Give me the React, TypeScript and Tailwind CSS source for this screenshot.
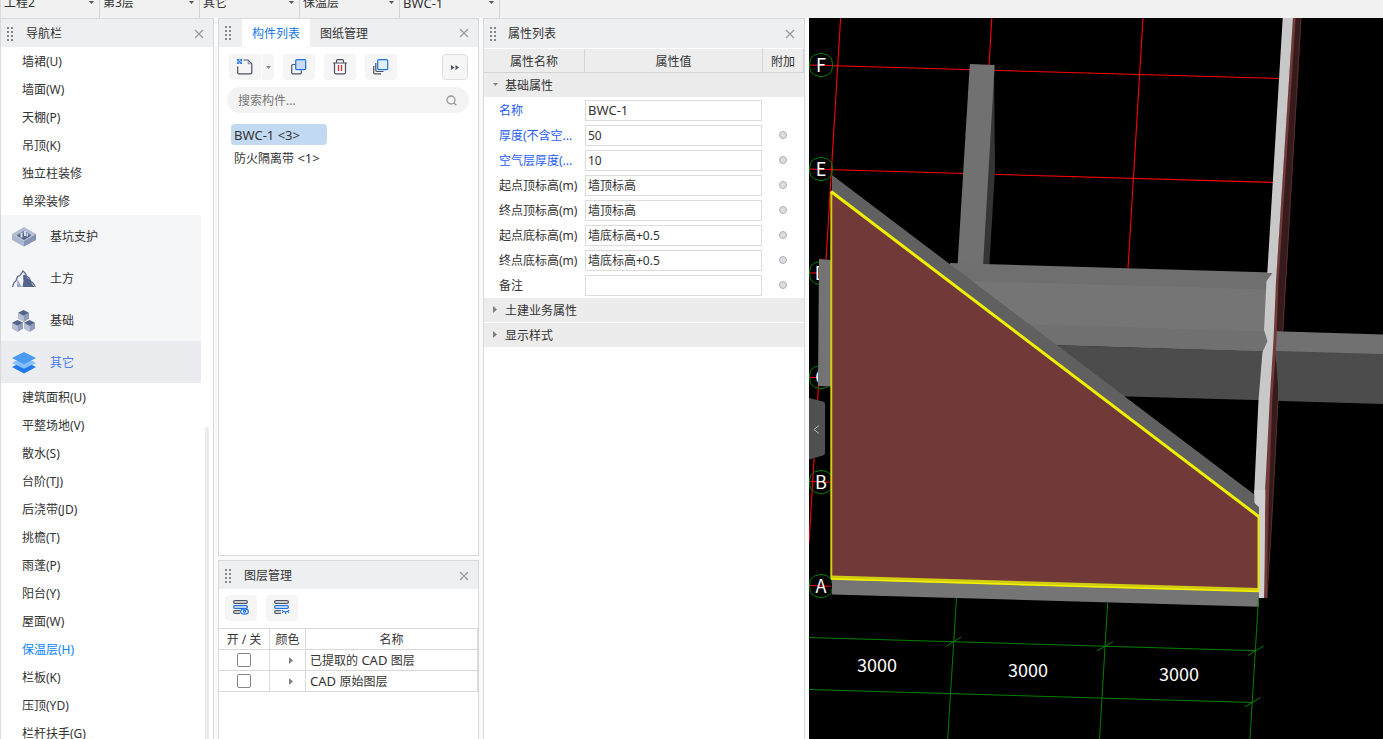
import React from 'react';

const FONT = "font-['Noto_Sans','Noto_Sans_CJK_SC',sans-serif]";

const topFields = ['工程2', '第3层', '其它', '保温层', 'BWC-1'];

const navBefore = ['墙裙(U)', '墙面(W)', '天棚(P)', '吊顶(K)', '独立柱装修', '单梁装修'];

const navAfter = [
  '建筑面积(U)', '平整场地(V)', '散水(S)', '台阶(TJ)', '后浇带(JD)', '挑檐(T)', '雨蓬(P)',
  '阳台(Y)', '屋面(W)', '保温层(H)', '栏板(K)', '压顶(YD)', '栏杆扶手(G)',
];

const properties = [
  { id: 'name', label: '名称', value: 'BWC-1', blue: true, extra: false },
  { id: 'thickness', label: '厚度(不含空...', value: '50', blue: true, extra: true },
  { id: 'air', label: '空气层厚度(...', value: '10', blue: true, extra: true },
  { id: 'start-top', label: '起点顶标高(m)', value: '墙顶标高', blue: false, extra: true },
  { id: 'end-top', label: '终点顶标高(m)', value: '墙顶标高', blue: false, extra: true },
  { id: 'start-bottom', label: '起点底标高(m)', value: '墙底标高+0.5', blue: false, extra: true },
  { id: 'end-bottom', label: '终点底标高(m)', value: '墙底标高+0.5', blue: false, extra: true },
  { id: 'remark', label: '备注', value: '', blue: false, extra: true },
];

function Latin({ children }: { children: React.ReactNode }) {
  return <span className="text-[13px]">{children}</span>;
}

const layers = [
  { id: 'extracted', label: <>已提取的<Latin> CAD </Latin>图层</> },
  { id: 'original', label: <><Latin>CAD </Latin>原始图层</> },
];

function Grip() {
  return (
    <svg width="8" height="16" viewBox="0 0 8 16" className="shrink-0" fill="#85868a" aria-hidden="true">
      {[1, 5, 9, 13].map((y) => (
        <g key={y}>
          <rect x="1" y={y} width="2" height="2" />
          <rect x="5" y={y} width="2" height="2" />
        </g>
      ))}
    </svg>
  );
}

function CloseButton({ label }: { label: string }) {
  return (
    <button type="button" aria-label={label} className="ml-auto flex size-4 shrink-0 items-center justify-center">
      <svg width="10" height="10" viewBox="0 0 10 10" fill="none" stroke="#9a9b9e" strokeWidth="1.2">
        <path d="M1 1l8 8M9 1L1 9" />
      </svg>
    </button>
  );
}

function DownArrow({ color = '#555' }: { color?: string }) {
  return (
    <svg width="5" height="3" viewBox="0 0 5 3" fill={color} aria-hidden="true">
      <path d="M0 0h5L2.5 3z" />
    </svg>
  );
}

function RightArrow() {
  return (
    <svg width="4" height="7" viewBox="0 0 4 7" fill="#808080" aria-hidden="true">
      <path d="M0 0l4 3.5L0 7z" />
    </svg>
  );
}

function TopBar() {
  return (
    <header className="flex h-[18px] shrink-0 items-end overflow-hidden border-l border-[#dcdcdc] bg-[#f1f1f1]">
      {topFields.map((name, i) => (
        <div key={name} className={`relative h-[30px] shrink-0 border-r border-[#d4d4d4] ${i === 0 ? 'w-[99px]' : 'w-[100px]'}`}>
          <select
            aria-label={name}
            className={`h-full w-full appearance-none bg-transparent pl-[3px] text-[#333] ${name === 'BWC-1' ? 'text-[13px]' : ''}`}
          >
            <option>{name}</option>
          </select>
          <span className="pointer-events-none absolute top-[13px] right-[5px]">
            <DownArrow />
          </span>
        </div>
      ))}
    </header>
  );
}

function PitIcon() {
  return (
    <svg width="24" height="20" viewBox="0 0 24 20">
      <path d="M12 0l12 7-12 7L0 7z" fill="#b4bdd2" />
      <path d="M0 7l12 7v5.5L0 13z" fill="#a9b4cd" />
      <path d="M24 7l-12 7v5.5L24 13z" fill="#8593b5" />
      <path d="M12 3.5l7.5 4.5-7.5 4.7L4.5 8z" fill="#7d8bad" />
      <path d="M5 8.5l7-2.5 7 2.5-7 4.5z" fill="#52648a" />
      <path d="M8.5 6h2v4.5h-2zM12 4h2v5h-2zM14.5 6.5h1.5v3h-1.5z" fill="#d8deea" />
    </svg>
  );
}

function MountainIcon() {
  return (
    <svg width="24" height="18" viewBox="0 0 24 18">
      <path d="M.5 17L2 12.500l2-1.500 1.500-4.500L8 5.500 11 1l2.500 2.500 1 2.500 2.500 2 2 3.500 2 1.500L23.500 17" fill="none" stroke="#53658b" strokeWidth="1.2" />
      <path d="M10.500 17l1-6-.5-5.500 2-1 2.500 3.500 2.500 2 2.500 4.500L22.500 17z" fill="#53658b" />
      <path d="M5 17l.5-8 2 4L10 17z" fill="#9aa7c3" />
    </svg>
  );
}

function Cube({ x, y }: { x: number; y: number }) {
  return (
    <g transform={`translate(${x} ${y})`}>
      <path d="M0 2.8v6L5.500 12V5.600z" fill="#b6bfd4" />
      <path d="M11 2.800v6L5.500 12V5.600z" fill="#8f9cbb" />
      <path d="M5.500 0L11 2.800 5.500 5.800 0 2.800z" fill="#53658b" />
    </g>
  );
}

function CubesIcon() {
  return (
    <svg width="24" height="22" viewBox="0 0 24 22">
      <Cube x={6} y={0} />
      <Cube x={0} y={10} />
      <Cube x={12} y={10} />
    </svg>
  );
}

function LayersIcon() {
  return (
    <svg width="24" height="22" viewBox="0 0 24 22">
      <path d="M12 9l12 6-12 6.500L0 15z" fill="#1f78f0" />
      <path d="M12 4.500l12 6.500-12 5.800L0 11z" fill="#86bffb" />
      <path d="M12 0l12 6-12 6.200L0 6z" fill="#4b9bf5" />
    </svg>
  );
}

const groups = [
  { name: '基坑支护', icon: <PitIcon />, active: false },
  { name: '土方', icon: <MountainIcon />, active: false },
  { name: '基础', icon: <CubesIcon />, active: false },
  { name: '其它', icon: <LayersIcon />, active: true },
];

function NavItem({ name }: { name: string }) {
  const active = name === '保温层(H)';
  return (
    <li>
      <button type="button" className={`flex h-7 w-full items-center pt-0.5 pl-[21px] ${active ? 'text-[#0a84ff]' : ''}`}>
        {name}
      </button>
    </li>
  );
}

function NavPanel() {
  return (
    <nav aria-label="导航栏" className="flex w-[214px] shrink-0 flex-col border border-b-0 border-[#d9d9db] bg-white">
      <div className="flex h-7 shrink-0 items-center bg-[#eeeff1] pt-0.5 pr-1.5 pl-[5px]">
        <Grip />
        <h2 className="ml-3">导航栏</h2>
        <CloseButton label="关闭导航栏" />
      </div>
      <div className="flex min-h-0 flex-1">
        <ul className="min-w-0 flex-1 overflow-hidden">
          {navBefore.map((n) => <NavItem key={n} name={n} />)}
          {groups.map((g) => (
            <li key={g.name}>
              <button
                type="button"
                className={`flex h-[42px] w-full items-center pt-0.5 pl-[11px] ${g.active ? 'bg-[#ebecef] text-[#4a7de8]' : 'bg-[#f5f6f8]'}`}
              >
                {g.icon}
                <span className="ml-3.5">{g.name}</span>
              </button>
            </li>
          ))}
          {navAfter.map((n) => <NavItem key={n} name={n} />)}
        </ul>
        <div className="flex w-3 shrink-0 flex-col px-1">
          <div className="mt-[380px] flex-1 rounded-t-full bg-[#ebebeb]" />
        </div>
      </div>
    </nav>
  );
}

function NewIcon() {
  return (
    <svg width="16" height="16" viewBox="0 0 16 16" fill="none" stroke="#4c5260" strokeWidth="1.2">
      <path d="M6.500 1h4.500l3.800 3.800V13.500a1.300 1.300 0 0 1-1.300 1.300H2A1.300 1.300 0 0 1 .7 13.500V7.500" />
      <path d="M10.600 1L14.800 5.200H10.600z" fill="#9da1aa" stroke="none" />
      <path d="M0 0h5v5H0z" fill="#a9cbf7" stroke="none" />
      <path d="M0 0h1.700v1.700H0zM3.300 0H5v1.700H3.300zM1.700 1.700h1.600v1.600H1.700zM0 3.300h1.700V5H0zM3.300 3.300H5V5H3.300z" fill="#1c72e4" stroke="none" />
    </svg>
  );
}

function CopyIcon() {
  return (
    <svg width="16" height="16" viewBox="0 0 16 16" fill="none" strokeWidth="1.2">
      <path d="M4.500 5.500H2A1.300 1.300 0 0 0 .7 6.800V13.500A1.300 1.300 0 0 0 2 14.800h7A1.300 1.300 0 0 0 10.300 13.500v-2" stroke="#4c5260" />
      <rect x="4.700" y=".7" width="10" height="10" rx="1.2" fill="#c9dbf6" stroke="#1c72e4" />
    </svg>
  );
}

function TrashIcon() {
  return (
    <svg width="16" height="16" viewBox="0 0 16 16" fill="none" stroke="#4c5260" strokeWidth="1.2">
      <path d="M1 4h14M4.500 4V2A1.300 1.300 0 0 1 5.800.7h4.400A1.300 1.300 0 0 1 11.500 2v2" />
      <path d="M2.500 4v9.500A1.300 1.300 0 0 0 3.800 14.800h8.400A1.300 1.300 0 0 0 13.500 13.500V4" />
      <path d="M6.500 6v6M9.500 6v6" stroke="#e0242c" />
    </svg>
  );
}

function StackIcon() {
  return (
    <svg width="16" height="16" viewBox="0 0 16 16" fill="none" strokeWidth="1.2">
      <path d="M2.800 4v7.200A1.300 1.300 0 0 0 4.100 12.500H10.500M.7 7v6.500A1.300 1.300 0 0 0 2 14.800h6" stroke="#4c5260" />
      <rect x="4.700" y=".7" width="10" height="10" rx="1.2" fill="#e3eefc" stroke="#1c72e4" />
    </svg>
  );
}

function ToolButton({ label, children }: { label: string; children: React.ReactNode }) {
  return (
    <button type="button" aria-label={label} className="flex h-[26px] w-8 items-center justify-center rounded bg-[#f5f5f5]">
      {children}
    </button>
  );
}

function ComponentPanel() {
  return (
    <section className="flex min-h-0 flex-1 flex-col border border-[#d9d9db] bg-white">
      <div className="flex h-7 shrink-0 items-center bg-[#eeeff1] pr-1.5 pl-[5px]">
        <Grip />
        <div role="tablist" className="ml-2.5 flex h-full">
          <button type="button" role="tab" aria-selected="true" className="bg-white px-2.5 pt-0.5 text-[#1677ea]">构件列表</button>
          <button type="button" role="tab" aria-selected="false" className="px-2.5 pt-0.5">图纸管理</button>
        </div>
        <CloseButton label="关闭构件列表" />
      </div>
      <div className="flex items-center gap-[9px] px-2.5 pt-[7px]">
        <div className="flex gap-px">
          <ToolButton label="新建"><NewIcon /></ToolButton>
          <button type="button" aria-label="新建选项" className="flex h-[26px] w-3 items-center justify-center rounded-r bg-[#f5f5f5]">
            <DownArrow color="#8a8a8a" />
          </button>
        </div>
        <ToolButton label="复制"><CopyIcon /></ToolButton>
        <ToolButton label="删除"><TrashIcon /></ToolButton>
        <ToolButton label="层间复制"><StackIcon /></ToolButton>
        <button type="button" aria-label="更多" className="ml-auto flex size-[26px] items-center justify-center rounded border border-[#dedede] bg-[#f6f6f6]">
          <svg width="8" height="5" viewBox="0 0 8 5" fill="#4c5260"><path d="M0 0l3.500 2.500L0 5zM4.500 0L8 2.500 4.500 5z" /></svg>
        </button>
      </div>
      <div className="mt-[7px] mr-[9px] ml-2 flex h-[26px] items-center rounded-full bg-[#f3f3f3] pr-3 pl-[11px]">
        <input aria-label="搜索构件" placeholder="搜索构件..." className="min-w-0 flex-1 bg-transparent pt-0.5 outline-none placeholder:text-[#777]" />
        <svg width="11" height="11" viewBox="0 0 11 11" fill="none" stroke="#9a9a9a" strokeWidth="1.3">
          <circle cx="5" cy="5" r="4" />
          <path d="M7.800 7.800L10.300 10.300" />
        </svg>
      </div>
      <ul className="mt-[11px] flex flex-col items-start gap-[3px] pl-3">
        <li>
          <button type="button" className="flex h-[21px] w-24 items-center rounded-sm bg-[#c2d9f2] pl-[3px]"><Latin>BWC-1 &lt;3&gt;</Latin></button>
        </li>
        <li>
          <button type="button" className="h-[21px] pl-[3px]">防火隔离带<Latin> &lt;1&gt;</Latin></button>
        </li>
      </ul>
    </section>
  );
}

function LayerGlyph({ open }: { open: boolean }) {
  return (
    <svg width="16" height="16" viewBox="0 0 16 16" fill="none" strokeWidth="1.2">
      <rect x=".6" y=".6" width="13.800" height="2.800" rx="1.4" stroke="#4c5260" />
      <rect x=".6" y="5.600" width="13.800" height="2.800" rx="1.4" stroke="#1c72e4" />
      <path d="M7 10.600H2a1.400 1.400 0 0 0 0 2.800h5" stroke="#4c5260" />
      {open ? (
        <>
          <ellipse cx="11.500" cy="11.500" rx="3.800" ry="2.700" fill="#f5f5f5" stroke="#1c72e4" />
          <circle cx="11.500" cy="11.300" r="1.100" stroke="#1c72e4" />
        </>
      ) : (
        <>
          <rect x="7.500" y="9.500" width="8.500" height="5" fill="#f5f5f5" />
          <path d="M8 10c1.500 2.500 5.500 2.500 7 0M9.200 11.500l-1 1.500M11.500 12v2M13.800 11.500l1 1.500" stroke="#1c72e4" />
        </>
      )}
    </svg>
  );
}

function LayerPanel() {
  return (
    <section className="mt-1 h-[179px] shrink-0 border border-b-0 border-[#d9d9db] bg-white">
      <div className="flex h-7 items-center bg-[#eeeff1] pt-0.5 pr-1.5 pl-[5px]">
        <Grip />
        <h2 className="ml-3">图层管理</h2>
        <CloseButton label="关闭图层管理" />
      </div>
      <div className="flex gap-[9px] px-1.5 pt-1.5 pb-[7px]">
        <ToolButton label="显示图层"><LayerGlyph open /></ToolButton>
        <ToolButton label="隐藏图层"><LayerGlyph open={false} /></ToolButton>
      </div>
      <table className="w-full table-fixed border-separate border-spacing-0 border-t border-[#d9d9db]">
        <colgroup>
          <col className="w-[51px]" />
          <col className="w-9" />
          <col />
        </colgroup>
        <thead>
          <tr>
            {['开 / 关', '颜色', '名称'].map((h) => (
              <th key={h} scope="col" className="h-[21px] border-r border-b border-[#d9d9db] p-0 pt-0.5 text-center font-normal">{h}</th>
            ))}
          </tr>
        </thead>
        <tbody>
          {layers.map((layer) => (
            <tr key={layer.id}>
              <td className="h-[21px] border-r border-b border-[#d9d9db] p-0">
                <input id={layer.id} type="checkbox" className="mx-auto block size-3.5 appearance-none rounded-xs border border-[#858585] bg-white" />
              </td>
              <td className="border-r border-b border-[#d9d9db] p-0">
                <span className="flex justify-center pl-1.5"><RightArrow /></span>
              </td>
              <td className="border-r border-b border-[#d9d9db] p-0 pl-1">
                <label htmlFor={layer.id} className="block">{layer.label}</label>
              </td>
            </tr>
          ))}
        </tbody>
      </table>
    </section>
  );
}

function GroupRow({ name, open }: { name: string; open: boolean }) {
  return (
    <tr>
      <td colSpan={3} className="h-[25px] border-b border-white bg-[#ececec] p-0">
        <button type="button" aria-expanded={open} className="flex w-full items-center pt-0.5 pl-2">
          <span className="flex w-[13px] shrink-0 pb-1 pl-px">{open ? <DownArrow color="#808080" /> : <RightArrow />}</span>
          {name}
        </button>
      </td>
    </tr>
  );
}

function PropertyPanel() {
  return (
    <section className="ml-1 w-[322px] shrink-0 border border-b-0 border-[#d9d9db] bg-white">
      <div className="flex h-[29px] items-center bg-[#eeeff1] pr-1.5 pl-[5px]">
        <Grip />
        <h2 className="ml-[11px]">属性列表</h2>
        <CloseButton label="关闭属性列表" />
      </div>
      <table className="mt-px w-full table-fixed border-separate border-spacing-0">
        <colgroup>
          <col className="w-[101px]" />
          <col className="w-[178px]" />
          <col />
        </colgroup>
        <thead>
          <tr className="bg-[#ededed]">
            {['属性名称', '属性值', '附加'].map((h) => (
              <th key={h} scope="col" className="h-6 border-r border-b border-[#d4d4d4] p-0 pt-0.5 font-normal">{h}</th>
            ))}
          </tr>
        </thead>
        <tbody>
          <GroupRow name="基础属性" open />
          {properties.map((p) => (
            <tr key={p.id}>
              <td className="h-[25px] p-0 pl-[15px] whitespace-nowrap">
                <label htmlFor={p.id} className={p.blue ? 'text-[#1f5cf0]' : ''}>{p.label}</label>
              </td>
              <td className="p-0 pr-px">
                <input
                  id={p.id}
                  defaultValue={p.value}
                  className={`block h-[21px] w-full border border-[#dcdcdc] bg-white px-0.5 pb-px outline-none ${p.value === 'BWC-1' ? 'text-[13px]' : ''}`}
                />
              </td>
              <td className="p-0 pr-px pb-px">
                {p.extra && (
                  <input type="radio" aria-label={`附加 ${p.label}`} className="mx-auto block size-2 appearance-none rounded-full border border-[#adb0b4] bg-[#dcdde0]" />
                )}
              </td>
            </tr>
          ))}
          <GroupRow name="土建业务属性" open={false} />
          <GroupRow name="显示样式" open={false} />
        </tbody>
      </table>
    </section>
  );
}

const axes = [
  { name: 'F', y: 65 },
  { name: 'E', y: 169 },
  { name: 'D', y: 273 },
  { name: 'C', y: 377 },
  { name: 'B', y: 482 },
  { name: 'A', y: 586 },
];

function Viewport() {
  return (
    <main className="relative ml-1 min-w-0 flex-1 overflow-hidden bg-black">
      <svg className="block h-full w-full" viewBox="809 18 574 721" preserveAspectRatio="xMinYMin slice">
        <g stroke="#ff0000" strokeWidth="1.1" fill="none">
          <path d="M840.600 18L809 543M991.800 18L989 66M1143 18L1128 269" />
          <path d="M809 65L1280 78.500M809 169L1275 182.500M809 273h12M809 377.500h12M809 481.500L831 482.300M809 585.500L831 586.200" />
        </g>

        {axes.map((a) => (
          <g key={a.name} transform={`translate(821 ${a.y})`}>
            <path d="M0-11.700L6.500-10 10.500-6.500 11.700 0 10.500 6.500 6.500 10 0 12-6.500 10-10.500 6.500-11.700 0-10.500-6.500-6.500-10z" fill="none" stroke="#008000" strokeWidth="1" />
            <text x="0" y="7" textAnchor="middle" fill="#fff" className="font-['Noto_Sans_CJK_SC',sans-serif] text-[18px]">{a.name}</text>
          </g>
        ))}

        <path d="M819 259L832 260V386.500L818 386z" fill="#737373" />

        {/* column */}
        <path d="M994 65L995 170 989.300 266H982z" fill="#353535" />
        <path d="M969.800 64L994.700 65 983 266H957.500z" fill="#717171" />

        {/* beams left of the exterior wall */}
        <path d="M950 263L1273 272.500V292L950 282z" fill="#6f6f6f" />
        <path d="M950 280.500L1272 289.500V333L950 323z" fill="#757575" />
        <path d="M950 322L1272 331.500V352L950 342z" fill="#707070" />
        <path d="M950 342L1272 351.500V400.500L1120 396.300z" fill="#4c4c4c" />

        {/* dark outer face, upper half */}
        <path d="M1293 18H1301.500L1283 332H1274z" fill="#351b1b" />
        <path d="M1301 18L1282.800 331" stroke="#5a2d2d" strokeWidth="1" />

        {/* beams right of the exterior wall */}
        <path d="M1276 331.300L1383 334.500V355L1274 351.500z" fill="#717171" />
        <path d="M1274 351L1383 354V404L1274 400.800z" fill="#4c4c4c" />

        <path d="M1275.500 354L1278 385V400L1274.700 467 1271 533 1267 598H1264L1268 400z" fill="#351b1b" />
        <path d="M1278 400L1274.700 467 1271 533 1267 598" fill="none" stroke="#5a2d2d" strokeWidth="1" />
        <path d="M1293 18H1295.700L1278.500 282 1276 351 1272.300 400 1268.500 510 1266.800 598H1262L1268 400z" fill="#713938" />

        {/* exterior wall */}
        <path
          d="M1282.700 18H1293L1276 282 1273.500 340 1269.700 400 1265.300 488 1264 598H1259V508L1254.300 503V490L1258.500 400 1262.500 352 1267.500 341 1264 330 1266.500 281 1272.500 273H1267.300z"
          fill="#c8c8c8"
        />
        <path d="M1254.300 490H1265.300L1264 598H1259V508L1254.300 503z" fill="#d0d0d0" />

        {/* diagonal and bottom walls */}
        <path d="M832 175L1254.300 494.500V503L1259 507V518L832 194z" fill="#606060" />
        <path d="M832 579L1259 592V606.700L832 594.500z" fill="#757575" />

        {/* selected insulation layer */}
        <path d="M831 191.500L1258.500 516.500V590L831 578z" fill="#713938" />
        <path d="M831.300 191.500V579" stroke="#d4cf10" strokeWidth="2" />
        <path d="M831 577.500L1259 590" stroke="#d2cd10" strokeWidth="4" />
        <path d="M831 579L1259 591.500" stroke="#f2f200" strokeWidth="1.5" />
        <path d="M1258.500 516V591" stroke="#e8e500" strokeWidth="2" />
        <path d="M831 191.500L1259 516.800" stroke="#eef000" strokeWidth="3" />

        {/* dimensions */}
        <g stroke="#008000" strokeWidth="1" fill="none">
          <path d="M956.500 598L947.700 739M1107.700 602.500L1099.500 739M1258.500 598L1250 739" />
          <path d="M809 637.500L1256 650.700M809 689.500L1253 702.500" />
          <path d="M946 646.500L961 637M1097 651L1113 641.500M1248 655.500L1263.500 646M1245 707L1260.500 697.500" />
        </g>
        <g fill="#fff" className="font-['Noto_Sans_CJK_SC',sans-serif] text-[18px]">
          <text x="857" y="672">3000</text>
          <text x="1008" y="677">3000</text>
          <text x="1159" y="681">3000</text>
        </g>
      </svg>
      <button type="button" aria-label="收起面板" className="absolute top-[380px] left-0">
        <svg width="16" height="62" viewBox="0 0 16 62" className="block">
          <path d="M0 0L14 3.500Q16 4 16 6V55Q16 57 14 57.500L0 61.500z" fill="#505050" />
          <path d="M10 27.500L5 31.500L10 35.500" fill="none" stroke="#b5b5b5" strokeWidth="1" />
        </svg>
      </button>
    </main>
  );
}

export default function App() {
  return (
    <div className={`flex h-screen flex-col overflow-hidden bg-[#fafafb] text-xs leading-4 text-[#333] ${FONT}`}>
      <TopBar />
      <div className="flex min-h-0 flex-1">
        <NavPanel />
        <div className="ml-1 flex w-[261px] shrink-0 flex-col">
          <ComponentPanel />
          <LayerPanel />
        </div>
        <PropertyPanel />
        <Viewport />
      </div>
    </div>
  );
}
